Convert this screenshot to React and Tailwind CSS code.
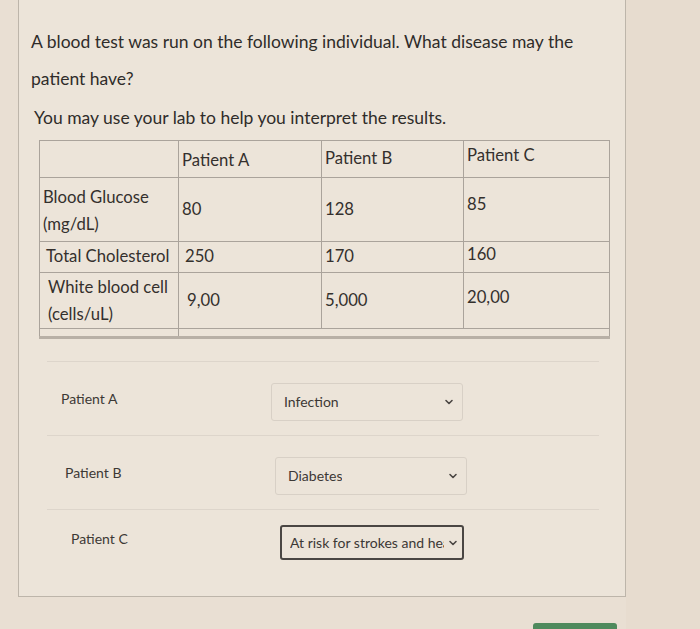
import React from "react";

function Chevron() {
  return (
    <svg width="10" height="10" viewBox="0 0 10 10" className="shrink-0">
      <path d="M2 3.5 L5 6.5 L8 3.5" fill="none" stroke="#4a4643" strokeWidth="1.6" strokeLinecap="round" strokeLinejoin="round" />
    </svg>
  );
}

function Select({ value, focused }) {
  return (
    <div
      className={
        "flex items-center justify-between text-[14px] text-[#3c3835] " +
        (focused
          ? "border-2 border-[#4a4643] rounded-[3px] h-[35px] w-[184px] pl-2 pr-1"
          : "border border-[#d8d0c6] rounded-[3px] w-[192px] h-[38px] pl-3 pr-2")
      }
    >
      <span className="whitespace-nowrap overflow-hidden mr-1">{value}</span>
      <Chevron />
    </div>
  );
}

function MatchRow({ label, value, focused, labelPad, selectPad, rowClass = "h-[74px]" }) {
  return (
    <div className={"flex items-center border-t border-[#ddd5cb] " + rowClass}>
      <div className={"w-[222px] text-[14px] text-[#3c3835] " + labelPad}>{label}</div>
      <div className={selectPad}>
        <Select value={value} focused={focused} />
      </div>
    </div>
  );
}

export default function App() {
  const cell = "border border-[#aaa39b] px-[3px] align-middle";
  return (
    <div
      className="w-[700px] h-[629px] bg-[#e9dfd3] overflow-hidden relative"
      style={{ fontFamily: "Lato, 'Open Sans', sans-serif" }}
    >
      <div className="absolute left-[626px] top-0 w-[74px] h-[629px] bg-[#e7dccf]" />
      <div className="ml-[18px] w-[608px] h-[597px] bg-[#ece4d9] border-l border-r border-b border-[#bdb5aa] relative">
        <div className="pl-[12px] pt-[23px] text-[#2f2c2a]">
          <p className="text-[17.5px] leading-[37px] w-[570px]">
            A blood test was run on the following individual. What disease may the patient have?
          </p>
          <p className="text-[17.5px] leading-[36px] mt-[3px] pl-[3px]">
            You may use your lab to help you interpret the results.
          </p>
        </div>

        <table className="ml-[20px] mt-[4px] border-collapse text-[16.7px] text-[#34302d] w-[570px] table-fixed">
          <colgroup>
            <col className="w-[139px]" />
            <col className="w-[143px]" />
            <col className="w-[142px]" />
            <col className="w-[146px]" />
          </colgroup>
          <tbody>
            <tr className="h-[37px]">
              <td className={cell}></td>
              <td className={cell + " pt-[4px]"}>Patient A</td>
              <td className={cell}>Patient B</td>
              <td className={cell + " pb-[6px]"}>Patient C</td>
            </tr>
            <tr className="h-[64px]">
              <td className={cell + " leading-[27px] pt-[2px]"}>
                Blood Glucose
                <br />
                (mg/dL)
              </td>
              <td className={cell}>80</td>
              <td className={cell}>128</td>
              <td className={cell + " pb-[10px]"}>85</td>
            </tr>
            <tr className="h-[31px]">
              <td className={cell + " pl-[6px] whitespace-nowrap"}>Total Cholesterol</td>
              <td className={cell + " pl-[6px]"}>250</td>
              <td className={cell}>170</td>
              <td className={cell + " pb-[4px]"}>160</td>
            </tr>
            <tr className="h-[56px]">
              <td className={cell + " leading-[27px] pl-[8px]"}>
                White blood cell
                <br />
                (cells/uL)
              </td>
              <td className={cell + " pl-[8px]"}>9,00</td>
              <td className={cell}>5,000</td>
              <td className={cell + " pb-[6px]"}>20,00</td>
            </tr>
            <tr className="h-[9px]">
              <td className="border border-[#aaa39b] border-b-[3px] border-b-[#b8b0a6]"></td>
              <td className="border-y border-[#aaa39b] border-b-[3px] border-b-[#b8b0a6]"></td>
              <td className="border-y border-[#aaa39b] border-b-[3px] border-b-[#b8b0a6]"></td>
              <td className="border-y border-r border-[#aaa39b] border-b-[3px] border-b-[#b8b0a6]"></td>
            </tr>
          </tbody>
        </table>

        <div className="mt-[22px] ml-[28px] w-[552px]">
          <MatchRow label="Patient A" value="Infection" labelPad="pl-[14px]" selectPad="pl-[2px] pt-[6px]" />
          <MatchRow label="Patient B" value="Diabetes" labelPad="pl-[18px]" selectPad="pl-[6px] pt-[6px]" />
          <MatchRow label="Patient C" value="At risk for strokes and heart attacks" focused labelPad="pl-[24px] pb-[8px]" selectPad="pl-[11px]" rowClass="h-[66px]" />
        </div>
      </div>
      <div className="absolute left-[533px] top-[623px] w-[84px] h-[10px] bg-[#4f8a5d] rounded-t-[3px]" />
    </div>
  );
}
